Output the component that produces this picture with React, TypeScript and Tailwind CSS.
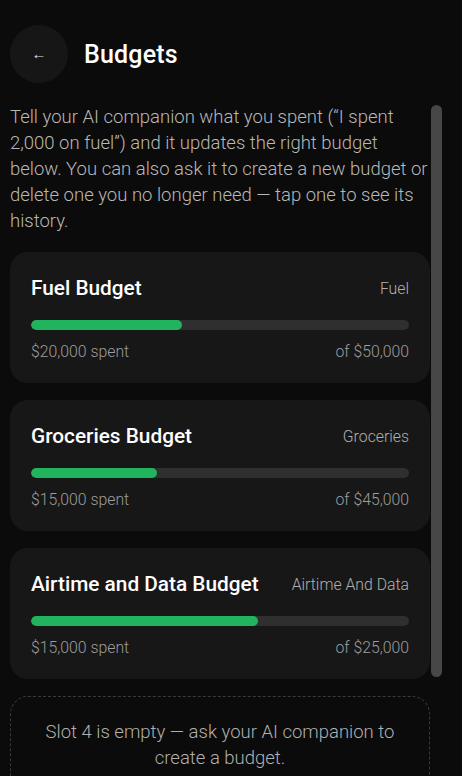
import React from "react";

const budgets = [
  { name: "Fuel Budget", cat: "Fuel", spent: "$20,000", total: "$50,000", pct: 40 },
  { name: "Groceries Budget", cat: "Groceries", spent: "$15,000", total: "$45,000", pct: 33.3 },
  { name: "Airtime and Data Budget", cat: "Airtime And Data", spent: "$15,000", total: "$25,000", pct: 60 },
];

export default function App() {
  return (
    <div
      className="w-[462px] h-[776px] overflow-hidden bg-[#0b0b0b] text-white"
      style={{ fontFamily: "Roboto, 'Noto Sans', sans-serif" }}
    >
      <div className="flex items-center pl-[10px] pt-[25px]">
        <button className="w-[58px] h-[58px] rounded-full bg-[#161616] flex items-center justify-center text-[#dddddd] text-[15px] leading-none">
          ←
        </button>
        <h1 className="ml-[16px] text-[25px] font-medium leading-none tracking-[0.2px]">Budgets</h1>
      </div>

      <div className="flex pl-[10px] mt-[21px]">
        <div className="w-[420px] shrink-0">
          <p className="w-[420px] text-[18.5px] leading-[26px] font-light text-[#b8b8b8]">
            Tell your AI companion what you spent (“I spent 2,000 on fuel”) and it updates the right budget below. You can also ask it to create a new budget or delete one you no longer need — tap one to see its history.
          </p>

          <div className="mt-[18px] flex flex-col gap-[17px]">
            {budgets.map((b) => (
              <div key={b.name} className="rounded-[18px] bg-[#171717] px-[21px] pt-[23px] pb-[21px]">
                <div className="flex items-center justify-between h-[28px]">
                  <span className="text-[20.8px] font-medium text-white">{b.name}</span>
                  <span className="text-[15.8px] font-light text-[#b0b0b0]">{b.cat}</span>
                </div>
                <div className="mt-[17px] h-[10px] rounded-full bg-[#2f2f2f] overflow-hidden">
                  <div className="h-full rounded-full bg-[#22b35e]" style={{ width: `${b.pct}%` }} />
                </div>
                <div className="mt-[12px] flex items-center justify-between h-[20px] text-[15.8px] font-light text-[#9d9d9d]">
                  <span>{b.spent} spent</span>
                  <span>of {b.total}</span>
                </div>
              </div>
            ))}
            <div className="rounded-[18px] border border-dashed border-[#3a3a3a] pt-[22px] pb-[22px] px-[20px] text-center text-[18.5px] leading-[26px] font-light text-[#b0b0b0]">
              Slot 4 is empty — ask your AI companion to create a budget.
            </div>
          </div>
        </div>
        <div className="ml-[1px] w-[11px] shrink-0">
          <div className="mt-[1px] h-[572px] rounded-full bg-[#474747]" />
        </div>
      </div>
    </div>
  );
}
